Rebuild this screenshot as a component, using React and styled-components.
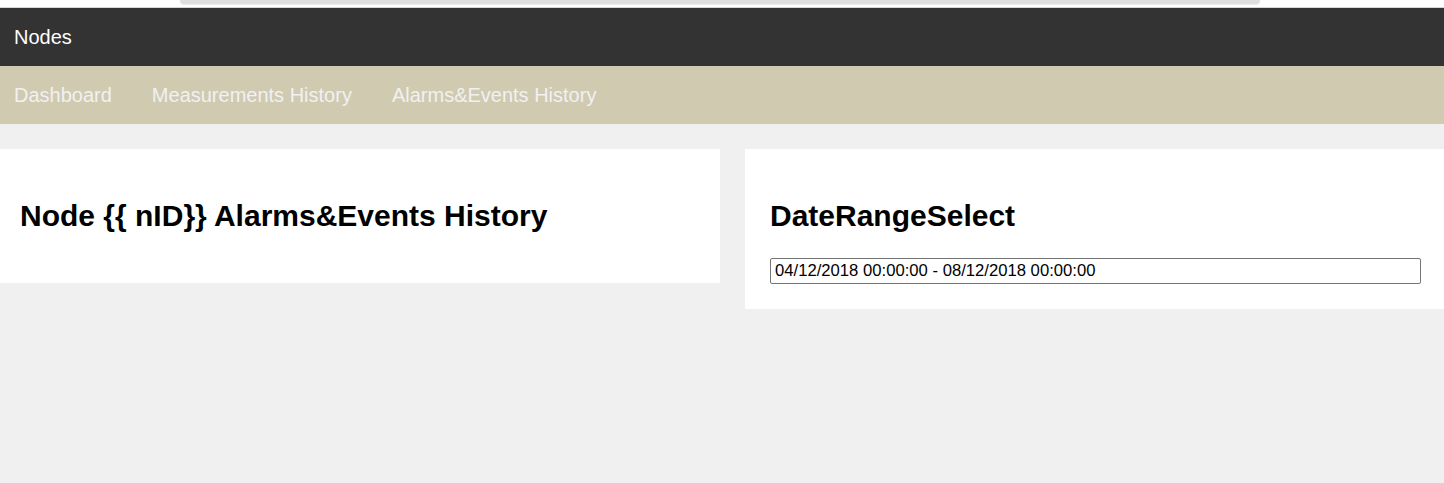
import React from "react";
import styled, { createGlobalStyle } from "styled-components";

const GlobalStyle = createGlobalStyle`
  html, body {
    margin: 0;
    padding: 0;
    background: #f0f0f0;
    font-family: "Liberation Sans", Arial, sans-serif;
  }
  * { box-sizing: border-box; }
`;

const Page = styled.div`
  min-height: 483px;
  background: #f0f0f0;
`;

const TopStrip = styled.div`
  height: 8px;
  background: #ffffff;
  border-bottom: 1px solid #d6d6d6;
`;

const ChromeBar = styled.div`
  margin-left: 180px;
  width: 1080px;
  height: 4px;
  background: #dfdfdf;
  border-radius: 0 0 6px 6px;
  box-shadow: 0 1px 1px rgba(0, 0, 0, 0.08);
`;

const TitleBar = styled.header`
  height: 58px;
  background: #333333;
  color: #ffffff;
  display: flex;
  align-items: center;
  padding-left: 14px;
  font-size: 20px;
`;

const NavBar = styled.nav`
  height: 58px;
  background: #d0cab1;
  display: flex;
  align-items: center;
  gap: 40px;
  padding-left: 14px;
`;

const NavLink = styled.a`
  color: #f1f1f1;
  font-size: 20px;
  text-decoration: none;
  cursor: pointer;
`;

const Content = styled.main`
  display: flex;
  align-items: flex-start;
  gap: 25px;
  padding-top: 25px;
`;

const Panel = styled.section`
  background: #ffffff;
  padding: 25px ${(p) => p.$right}px 25px ${(p) => p.$left}px;
  width: ${(p) => p.$width};
  flex: ${(p) => (p.$grow ? "1 1 auto" : "0 0 auto")};
`;

const Heading = styled.h2`
  margin: 25px 0 25px;
  font-size: 30px;
  font-weight: bold;
  color: #000000;
  line-height: normal;
`;

const RangeInput = styled.input`
  display: block;
  width: 100%;
  height: 26px;
  padding: 3px 4px;
  border: 1px solid #767676;
  border-radius: 2px;
  font-family: "Liberation Sans", Arial, sans-serif;
  font-size: 16.67px;
  color: #000000;
  background: #ffffff;
  outline: none;
`;

export default function App() {
  return (
    <>
      <GlobalStyle />
      <Page>
        <TopStrip>
          <ChromeBar />
        </TopStrip>
        <TitleBar>Nodes</TitleBar>
        <NavBar>
          <NavLink>Dashboard</NavLink>
          <NavLink>Measurements History</NavLink>
          <NavLink>Alarms&amp;Events History</NavLink>
        </NavBar>
        <Content>
          <Panel $left={20} $right={20} $width="720px">
            <Heading>Node {"{{"} nID{"}}"} Alarms&amp;Events History</Heading>
          </Panel>
          <Panel $left={25} $right={23} $grow>
            <Heading>DateRangeSelect</Heading>
            <RangeInput
              type="text"
              readOnly
              value="04/12/2018 00:00:00 - 08/12/2018 00:00:00"
            />
          </Panel>
        </Content>
      </Page>
    </>
  );
}
